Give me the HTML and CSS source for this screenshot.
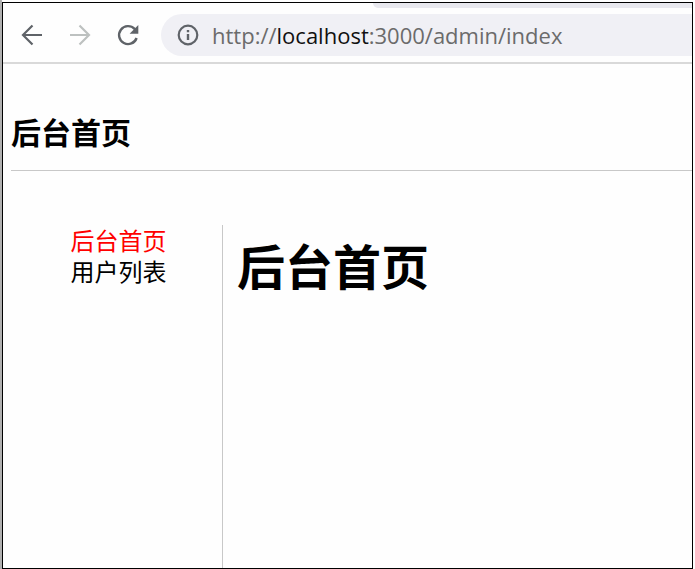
FILE: index.html
```html
<!DOCTYPE html>
<html lang="zh-CN">
<head>
    <meta charset="UTF-8">
    <meta name="viewport" content="width=device-width, initial-scale=1.0">
    <title>后台首页</title>
    <link rel="stylesheet" href="styles.css">
</head>
<body>
    <div class="window">
        <div class="tab-strip">
            <div class="tab-active"></div>
            <div class="tab-rest"></div>
        </div>
        <div class="toolbar">
            <button class="nav-button" type="button" aria-label="Back">
                <svg width="24" height="24" viewBox="0 0 24 24" fill="none" stroke="#5f6368" stroke-width="2.2">
                    <path d="M22 12H3.5M12.5 2.5L3 12l9.5 9.5"/>
                </svg>
            </button>
            <button class="nav-button" type="button" aria-label="Forward" disabled>
                <svg width="24" height="24" viewBox="0 0 24 24" fill="none" stroke="#bdc1c0" stroke-width="2.2">
                    <path d="M2 12h18.5M11.5 2.5L21 12l-9.5 9.5"/>
                </svg>
            </button>
            <button class="nav-button" type="button" aria-label="Reload">
                <svg width="24" height="24" viewBox="0 0 24 24">
                    <path d="M20.6 15A9 9 0 1 1 18.6 5.9L20 7.3" fill="none" stroke="#5f6368" stroke-width="2.4"/>
                    <path d="M22.3 2v8.7h-8.7z" fill="#5f6368"/>
                </svg>
            </button>
            <div class="address-bar">
                <svg width="22" height="22" viewBox="0 0 22 22" fill="none" stroke="#5f6368" stroke-width="2.2">
                    <circle cx="11" cy="11" r="9.3"/>
                    <path d="M11 10v6M11 6v2.3" stroke-width="2.4"/>
                </svg>
                <div class="url">http://<span class="host">localhost</span>:3000/admin/index</div>
            </div>
        </div>
        <div class="page">
            <header class="header">
                <h3>后台首页</h3>
            </header>
            <div class="container">
                <nav class="menu">
                    <a class="active" href="#index">后台首页</a>
                    <a href="#users">用户列表</a>
                </nav>
                <main class="content">
                    <h1>后台首页</h1>
                </main>
            </div>
        </div>
    </div>
</body>
</html>
```
FILE: styles.css
```css
* {
    box-sizing: border-box;
}
body {
    margin: 0;
    padding: 2px 2px 0 0;
    min-height: 100vh;
    display: flex;
    background: #fff;
    border-left: 2px solid #b0b0b0;
    font-family: "Open Sans", "Noto Sans CJK SC", sans-serif;
    color: #000;
}
.window {
    flex: 1;
    min-width: 0;
    display: flex;
    flex-direction: column;
    border: 1px solid #000;
    background: #fefefe;
    overflow: hidden;
}
.tab-strip {
    display: flex;
    height: 5px;
}
.tab-active {
    width: 370px;
}
.tab-rest {
    flex: 1;
    background: #e8e8ee;
    border-bottom-left-radius: 5px;
}
.toolbar {
    display: flex;
    align-items: center;
    padding: 6px 0 6px 17px;
    border-bottom: 2px solid #d9d9d9;
}
.nav-button {
    flex: none;
    display: flex;
    width: 24px;
    margin-right: 24px;
    padding: 0;
    border: none;
    background: none;
}
.nav-button:nth-of-type(3) {
    margin-right: 21px;
}
.address-bar {
    flex: 1;
    display: flex;
    align-items: center;
    gap: 13px;
    height: 42px;
    padding-left: 16px;
    background: #f0f0f5;
    border-radius: 21px 0 0 21px;
    white-space: nowrap;
}
.url {
    font-size: 22px;
    line-height: 30px;
    color: #6b6b6b;
}
.host {
    color: #111;
}
.page {
    flex: 1;
    display: flex;
    flex-direction: column;
    padding-left: 8px;
}
.header {
    padding: 48px 0 16px;
    border-bottom: 1px solid #c8c8c8;
}
.header h3 {
    margin: 0;
    font-size: 30px;
    line-height: 42px;
}
.container {
    flex: 1;
    display: flex;
    margin-top: 54px;
}
.menu {
    width: 212px;
    padding-left: 4px;
    border-right: 1px solid #c8c8c8;
    text-align: center;
}
.menu a {
    display: block;
    font-size: 24px;
    line-height: 31px;
    color: #000;
    text-decoration: none;
}
.menu .active {
    color: #f00;
}
.content {
    padding: 10px 14px;
}
.content h1 {
    margin: 0;
    font-size: 48px;
    line-height: 64px;
}
```
